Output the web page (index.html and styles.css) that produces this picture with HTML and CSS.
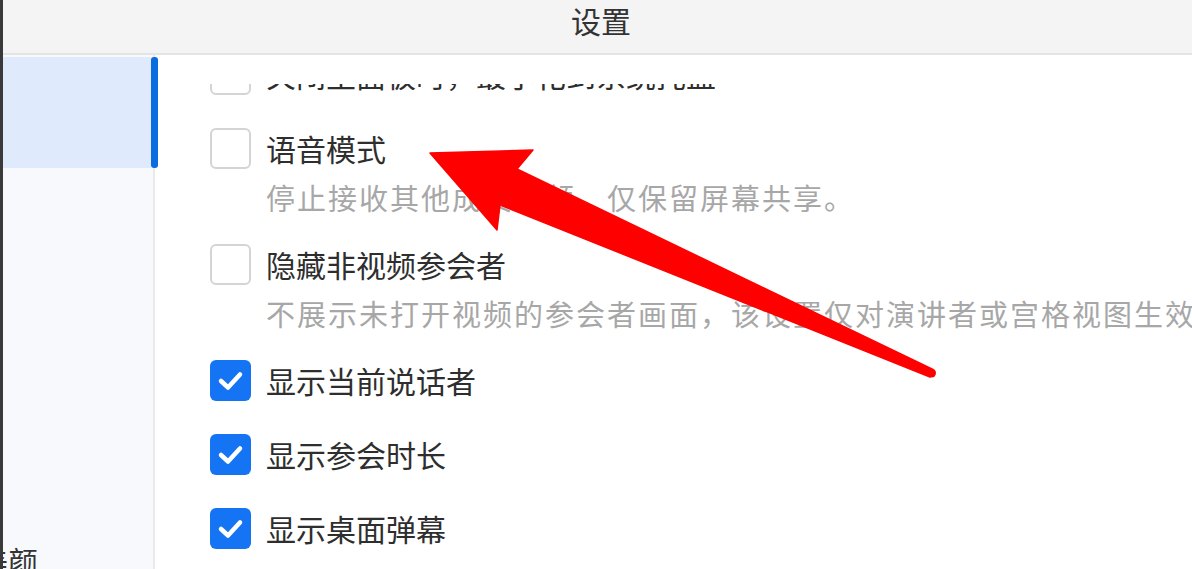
FILE: index.html
```html
<!DOCTYPE html>
<html lang="zh-CN">
<head>
<meta charset="utf-8">
<title>设置</title>
<link rel="stylesheet" href="styles.css">
</head>
<body>
<div class="app">
  <div class="edge"></div>
  <div class="window">
    <header class="titlebar">设置</header>
    <div class="main">
      <nav class="sidebar">
        <div class="nav-item active"><span class="nav-label">常规设置</span></div>
        <div class="nav-item bottom">美颜</div>
      </nav>
      <section class="pane">
        <div class="viewport">
          <div class="list">
            <div class="opt">
              <span class="box"></span>
              <span class="title">关闭主面板时，最小化到系统托盘</span>
            </div>
            <div class="opt">
              <span class="box"></span>
              <span class="title">语音模式</span>
              <span class="desc">停止接收其他成员视频，仅保留屏幕共享。</span>
            </div>
            <div class="opt">
              <span class="box"></span>
              <span class="title">隐藏非视频参会者</span>
              <span class="desc">不展示未打开视频的参会者画面，该设置仅对演讲者或宫格视图生效。</span>
            </div>
            <div class="opt">
              <span class="box checked"><svg viewBox="0 0 41 41" class="tick"><path d="M11 21 L18 27.5 L30 14.5"/></svg></span>
              <span class="title">显示当前说话者</span>
            </div>
            <div class="opt">
              <span class="box checked"><svg viewBox="0 0 41 41" class="tick"><path d="M11 21 L18 27.5 L30 14.5"/></svg></span>
              <span class="title">显示参会时长</span>
            </div>
            <div class="opt">
              <span class="box checked"><svg viewBox="0 0 41 41" class="tick"><path d="M11 21 L18 27.5 L30 14.5"/></svg></span>
              <span class="title">显示桌面弹幕</span>
            </div>
          </div>
        </div>
      </section>
    </div>
  </div>
  <svg class="arrow" viewBox="0 0 1192 569" width="1192" height="569">
    <polygon points="430,153 533,150 517,169 932,369 930,377 500,205 497,230" fill="#fe0000" stroke="#fe0000" stroke-width="1.5" stroke-linejoin="round"/>
    <circle cx="931.5" cy="373" r="4.5" fill="#fe0000"/>
  </svg>
</div>
</body>
</html>
```
FILE: styles.css
```css
html, body {
  margin: 0;
  padding: 0;
}
body {
  width: 1192px;
  height: 569px;
  overflow: hidden;
  background: #ffffff;
  font-family: "Noto Sans CJK SC", "Noto Sans", sans-serif;
  color: #333333;
}
.app {
  position: relative;
  display: flex;
  width: 1192px;
  height: 569px;
  overflow: hidden;
}
.edge {
  width: 3px;
  flex: none;
  background: #3a3a3a;
}
.window {
  flex: 1;
  display: flex;
  flex-direction: column;
  min-width: 0;
}
.titlebar {
  height: 53px;
  flex: none;
  box-sizing: content-box;
  border-bottom: 2px solid #e4e4e4;
  background: #f4f4f4;
  text-align: center;
  font-size: 30px;
  line-height: 40px;
  padding-top: 0;
  padding-left: 7px;
  color: #333333;
}
.main {
  flex: 1;
  display: flex;
  min-height: 0;
}
.sidebar {
  width: 150px;
  flex: none;
  background: #f7f9fc;
  border-right: 2px solid #e8e9eb;
  display: flex;
  flex-direction: column;
  padding-top: 2px;
  position: relative;
}
.nav-item {
  flex: none;
  font-size: 30px;
  line-height: 40px;
  white-space: nowrap;
  overflow: hidden;
  color: #333333;
}
.nav-item.active {
  height: 111px;
  background: #dfebfd;
  position: relative;
  overflow: visible;
  margin-right: 2px;
}
.nav-item.active::after {
  content: "";
  position: absolute;
  top: 0;
  bottom: 0;
  right: -7px;
  width: 7px;
  border-radius: 3px;
  background: #0b6ce0;
}
.nav-label {
  display: block;
  text-indent: -200px;
  color: transparent;
}
.nav-item.bottom {
  margin-top: 372px;
  text-indent: -25px;
}
.pane {
  flex: 1;
  min-width: 0;
  background: #ffffff;
  padding-top: 29px;
  display: flex;
  flex-direction: column;
}
.viewport {
  flex: 1;
  overflow: hidden;
}
.list {
  margin-top: -30px;
  padding-left: 55px;
  display: flex;
  flex-direction: column;
  gap: 33px;
}
.opt {
  display: grid;
  grid-template-columns: 41px auto;
  column-gap: 15px;
  align-items: start;
}
.box {
  width: 41px;
  height: 41px;
  box-sizing: border-box;
  border: 2px solid #d4d4d4;
  border-radius: 6px;
  background: #ffffff;
  display: block;
}
.box.checked {
  border: none;
  background: #1474f4;
}
.tick {
  display: block;
  width: 41px;
  height: 41px;
  fill: none;
  stroke: #ffffff;
  stroke-width: 4.5;
  stroke-linecap: round;
  stroke-linejoin: round;
}
.title {
  font-size: 30px;
  line-height: 41px;
  color: #2e2e2e;
  white-space: nowrap;
}
.desc {
  grid-column: 2;
  margin-top: 14px;
  font-size: 29px;
  line-height: 28px;
  letter-spacing: 2px;
  color: #a7a7a7;
  white-space: nowrap;
}
.arrow {
  position: absolute;
  left: 0;
  top: 0;
  pointer-events: none;
}
```
